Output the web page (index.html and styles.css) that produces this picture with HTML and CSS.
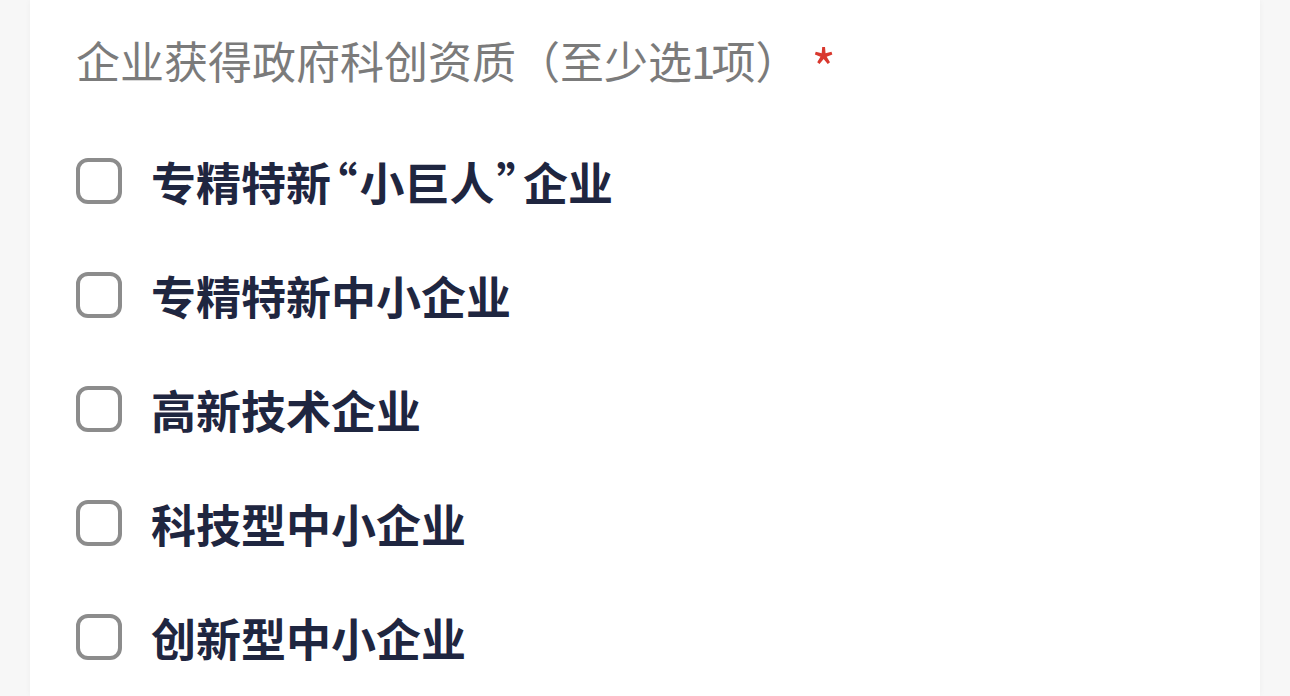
FILE: index.html
```html
<!DOCTYPE html>
<html lang="zh-CN">
<head>
<meta charset="utf-8">
<link rel="stylesheet" href="styles.css">
</head>
<body>
<div class="page">
  <div class="card">
    <div class="question">
      <span class="q-text">企业获得政府科创资质（至少选<span class="num">1</span>项）</span>
      <span class="required">*</span>
    </div>
    <ul class="options">
      <li class="option"><span class="box"></span><span class="label">专精特新<span class="quote ql">“</span>小巨人<span class="quote qr">”</span>企业</span></li>
      <li class="option"><span class="box"></span><span class="label">专精特新中小企业</span></li>
      <li class="option"><span class="box"></span><span class="label">高新技术企业</span></li>
      <li class="option"><span class="box"></span><span class="label">科技型中小企业</span></li>
      <li class="option"><span class="box"></span><span class="label">创新型中小企业</span></li>
    </ul>
  </div>
</div>
</body>
</html>
```
FILE: styles.css
```css
html, body {
  margin: 0;
  padding: 0;
  height: 100%;
  overflow: hidden;
}
body {
  background: #f7f7f7;
  font-family: "Noto Sans CJK SC", "Noto Sans", sans-serif;
}
.page {
  padding: 0 30px;
  height: 100%;
}
.card {
  background: #ffffff;
  height: 100%;
  box-shadow: 0 0 6px rgba(0,0,0,0.04);
  padding: 0 0 0 46px;
}
.question {
  display: flex;
  align-items: center;
  height: 124px;
}
.q-text {
  font-size: 44px;
  color: #7b7b7b;
  font-weight: 400;
  line-height: 1;
  position: relative;
  top: -2px;
}
.num {
  letter-spacing: -4px;
  margin-left: -1px;
}
.required {
  color: #d9382e;
  font-size: 52px;
  margin-left: 12px;
  line-height: 1;
  position: relative;
  top: 4px;
}
.options {
  list-style: none;
  margin: 0;
  padding: 0;
}
.option {
  display: flex;
  align-items: center;
  height: 114px;
}
.box {
  width: 38px;
  height: 38px;
  border: 4px solid #8c8c8c;
  border-radius: 12px;
  flex: none;
}
.label {
  margin-left: 29px;
  font-size: 45px;
  font-weight: 700;
  color: #1f2640;
  line-height: 1;
}
.quote {
  font-feature-settings: "halt";
}
.ql {
  margin: 0 2px 0 4px;
}
.qr {
  margin: 0 4px 0 2px;
}
```
